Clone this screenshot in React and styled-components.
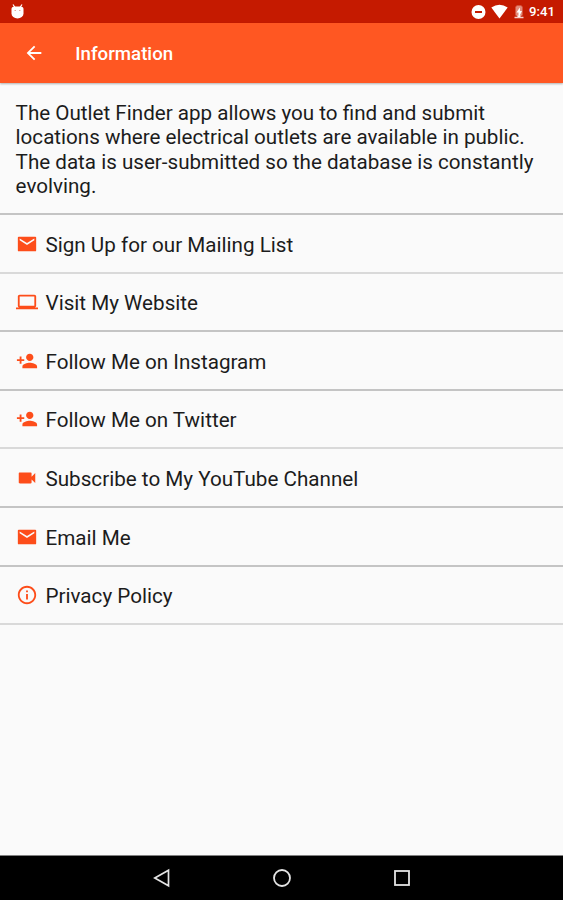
import React from 'react';
import styled, { createGlobalStyle } from 'styled-components';

// Define color palette
const colors = {
  statusRed: '#C51A00',
  orange: '#FF5722',
  background: '#FAFAFA',
  text: '#1C1C1C',
  icon: '#FD4D1A',
  divider: '#C4C4C4',
  dividerSoft: '#D9D9D9',
  navIcon: '#E4E4E4',
  black: '#000000',
  white: '#FFFFFF',
};

const GlobalStyle = createGlobalStyle`
  * {
    box-sizing: border-box;
  }
  body {
    margin: 0;
    font-family: Roboto, sans-serif;
    background: ${colors.background};
  }
`;

// Styled components
const Screen = styled.div`
  width: 563px;
  height: 900px;
  display: flex;
  flex-direction: column;
  overflow: hidden;
  background: ${colors.background};
`;

const StatusBar = styled.div`
  height: 23px;
  flex: none;
  display: flex;
  align-items: center;
  padding: 1px 7px 0 10px;
  background: ${colors.statusRed};
  color: ${colors.white};
`;

const StatusIcons = styled.div`
  margin-left: auto;
  display: flex;
  align-items: center;
`;

const Clock = styled.span`
  margin-left: 4px;
  width: 27px;
  font-size: 13.2px;
  font-weight: 500;
  line-height: 16px;
  white-space: nowrap;
`;

const Toolbar = styled.header`
  height: 60px;
  flex: none;
  display: flex;
  align-items: center;
  padding: 2px 23px 0;
  background: ${colors.orange};
  color: ${colors.white};
  box-shadow: 0 1px 2px rgba(0, 0, 0, 0.3);

  svg {
    margin-bottom: 2px;
  }
`;

const Title = styled.h1`
  margin: 0 0 0 30.3px;
  font-size: 18.7px;
  font-weight: 500;
  line-height: 24px;
`;

const Description = styled.p`
  height: 130px;
  flex: none;
  margin: 0;
  padding: 18px 15.6px 0;
  font-size: 20.62px;
  line-height: 24.4px;
  color: ${colors.text};
  white-space: nowrap;
`;

const List = styled.ul`
  flex: 1;
  margin: 0;
  padding: 0;
  list-style: none;
`;

const Row = styled.li`
  height: 58.6px;
  display: flex;
  align-items: center;
  padding: 2.6px 15.7px 0;
  border-top: 2px solid ${(props) => (props.$soft ? colors.dividerSoft : colors.divider)};
  color: ${colors.text};
  font-size: 20.65px;
  line-height: 24px;

  svg {
    margin: -2px 7.8px 0 0;
    color: ${colors.icon};
  }
`;

const ListEnd = styled.li`
  height: 2px;
  background: ${colors.dividerSoft};
`;

const NavBar = styled.nav`
  height: 45px;
  flex: none;
  display: flex;
  align-items: center;
  justify-content: center;
  gap: 96px;
  padding-bottom: 1px;
  border-top: 1px solid #808080;
  background: ${colors.black};
`;

const paths = {
  mail: 'M21 4H3c-.6 0-1 .4-1 1v14c0 .6.4 1 1 1h18c.6 0 1-.4 1-1V5c0-.6-.4-1-1-1zm-1 4l-8 5-8-5V6l8 5 8-5v2z',
  laptop: 'M20 18c1.1 0 1.99-.9 1.99-2L22 6c0-1.1-.9-2-2-2H4c-1.1 0-2 .9-2 2v10c0 1.1.9 2 2 2H0v2h24v-2h-4zM4 6h16v10H4V6z',
  personAdd: 'M15 12c2.21 0 4-1.79 4-4s-1.79-4-4-4-4 1.79-4 4 1.79 4 4 4zm-9-2V7H4v3H1v2h3v3h2v-3h3v-2H6zm9 4c-2.67 0-8 1.34-8 4v2h16v-2c0-2.66-5.33-4-8-4z',
  video: 'M17 10.5V7c0-.55-.45-1-1-1H4c-.55 0-1 .45-1 1v10c0 .55.45 1 1 1h12c.55 0 1-.45 1-1v-3.5l4 4v-11l-4 4z',
  info: 'M11 7h2v2h-2zm0 4h2v6h-2zm1-9C6.48 2 2 6.48 2 12s4.48 10 10 10 10-4.48 10-10S17.52 2 12 2zm0 18c-4.41 0-8-3.59-8-8s3.59-8 8-8 8 3.59 8 8-3.59 8-8 8z',
  back: 'M20 11H7.83l5.59-5.59L12 4l-8 8 8 8 1.41-1.41L7.83 13H20v-2z',
};

const Icon = ({ name, size = 22 }) => (
  <svg width={size} height={size} viewBox="0 0 24 24" fill="currentColor">
    <path d={paths[name]} />
  </svg>
);

const items = [
  { icon: 'mail', label: 'Sign Up for our Mailing List' },
  { icon: 'laptop', label: 'Visit My Website', soft: true },
  { icon: 'personAdd', label: 'Follow Me on Instagram' },
  { icon: 'personAdd', label: 'Follow Me on Twitter' },
  { icon: 'video', label: 'Subscribe to My YouTube Channel', soft: true },
  { icon: 'mail', label: 'Email Me' },
  { icon: 'info', label: 'Privacy Policy' },
];

const App = () => (
  <>
    <GlobalStyle />
    <Screen>
      <StatusBar>
        <svg width="15" height="16" viewBox="0 0 15 16">
          <path d="M3 .5l2 3M12 .5l-2 3" stroke="#fff" strokeWidth="1.2" />
          <path d="M1.5 5Q1.5 2.5 4.5 2.5h6q3 0 3 2.5v4.5a6 5 0 0 1-12 0z" fill="#fff" />
          <path d="M4.5 6.5H6M9 6.5h1.5" stroke="#e6a89f" />
        </svg>
        <StatusIcons>
          <svg width="54" height="16" viewBox="0 0 54 16">
            <circle cx="7.5" cy="8" r="7" fill="#fff" />
            <path d="M4 8h7" stroke={colors.statusRed} strokeWidth="2" />
            <path d="M20.3 3.5q8.2-5.5 16.4 0l-8.2 11z" fill="#fff" />
            <path d="M45.5 1.5h5v1h1v9h-7v-9h1z" fill="#e38b7b" />
            <path d="M48.8 3.5l-3.3 5h2v3h-2L48 14l2.500-2.500h-1.800L51 7h-2z" fill="#fff" />
            <path d="M43.5 13.5h9" stroke="#f5cfc8" strokeWidth="1.5" />
          </svg>
          <Clock>9:41</Clock>
        </StatusIcons>
      </StatusBar>
      <Toolbar>
        <Icon name="back" />
        <Title>Information</Title>
      </Toolbar>
      <Description>
        The Outlet Finder app allows you to find and submit
        <br />
        locations where electrical outlets are available in public.
        <br />
        The data is user-submitted so the database is constantly
        <br />
        evolving.
      </Description>
      <List>
        {items.map((item) => (
          <Row key={item.label} $soft={item.soft}>
            <Icon name={item.icon} />
            {item.label}
          </Row>
        ))}
        <ListEnd />
      </List>
      <NavBar>
        <svg width="24" height="24" viewBox="0 0 24 24" fill="none" stroke={colors.navIcon} strokeWidth="1.7">
          <path d="M18.5 4.3v15.4L4.8 12z" />
        </svg>
        <svg width="24" height="24" viewBox="0 0 24 24" fill="none" stroke={colors.navIcon} strokeWidth="1.8">
          <circle cx="12" cy="12" r="8" />
        </svg>
        <svg width="24" height="24" viewBox="0 0 24 24" fill="none" stroke={colors.navIcon} strokeWidth="1.8">
          <rect x="5" y="5" width="14" height="14" />
        </svg>
      </NavBar>
    </Screen>
  </>
);

export default App;
